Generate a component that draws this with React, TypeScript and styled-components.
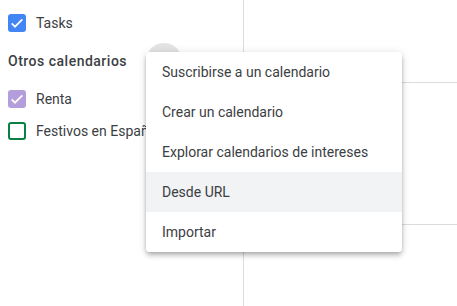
import React from 'react';
import styled, {createGlobalStyle} from 'styled-components';

const GlobalStyle = createGlobalStyle`
  html, body {
    margin: 0;
    padding: 0;
    background: #fff;
  }
  body {
    font-family: Roboto, "Noto Sans", Arial, sans-serif;
    color: #3c4043;
  }
`;

interface CalendarItem {
  label: string;
  color: string;
  checked: boolean;
}

const otherCalendars: CalendarItem[] = [
  {label: 'Renta', color: '#b39ddb', checked: true},
  {label: 'Festivos en España', color: '#0b8043', checked: false},
];

const menuItems = [
  'Suscribirse a un calendario',
  'Crear un calendario',
  'Explorar calendarios de intereses',
  'Desde URL',
  'Importar',
];

const CheckMark = () => (
  <svg width="16" height="16" viewBox="0 0 24 24">
    <path d="M4 12.5l5 5L20 6.5" fill="none" stroke="#fff" strokeWidth="2.6" />
  </svg>
);

const Calendar = ({label, color, checked}: CalendarItem) => (
  <CalendarRow>
    <Box color={color} checked={checked}>
      {checked && <CheckMark />}
    </Box>
    <Label>{label}</Label>
  </CalendarRow>
);

const App = () => {
  return (
    <Page>
      <GlobalStyle />
      <Sidebar>
        <Calendar label="Tasks" color="#4285f4" checked={true} />
        <SectionHeader>
          <SectionTitle>Otros calendarios</SectionTitle>
          <AddButton />
        </SectionHeader>
        {otherCalendars.map((item) => (
          <Calendar key={item.label} {...item} />
        ))}
      </Sidebar>
      <Grid>
        <GridRow height={83} />
        <GridRow height={142} />
        <GridRow height={81} last />
      </Grid>
      <Menu>
        {menuItems.map((item) => (
          <MenuItem key={item} active={item === 'Desde URL'}>
            {item}
          </MenuItem>
        ))}
      </Menu>
    </Page>
  );
};

const Page = styled.div`
  position: relative;
  display: flex;
  width: 457px;
  height: 306px;
  overflow: hidden;
  background: #fff;
`;

const Sidebar = styled.div`
  width: 244px;
  flex: none;
  padding: 7px 0 0 8px;
  box-sizing: border-box;
  border-right: 1px solid #dadce0;
  overflow: hidden;
`;

const CalendarRow = styled.div`
  display: flex;
  align-items: center;
  height: 32px;
  gap: 10px;
  white-space: nowrap;
`;

const Box = styled.div<{color: string; checked: boolean}>`
  width: 18px;
  height: 18px;
  flex: none;
  box-sizing: border-box;
  border-radius: 3px;
  display: flex;
  align-items: center;
  justify-content: center;
  background: ${({checked, color}) => (checked ? color : 'transparent')};
  border: ${({checked, color}) => (checked ? 'none' : `2px solid ${color}`)};
`;

const Label = styled.span`
  font-size: 14px;
  color: #3c4043;
  line-height: 20px;
`;

const SectionHeader = styled.div`
  display: flex;
  align-items: center;
  gap: 18px;
  height: 44px;
`;

const SectionTitle = styled.span`
  width: 120px;
  font-size: 14px;
  font-weight: 500;
  color: #3c4043;
  letter-spacing: 0.5px;
  white-space: nowrap;
`;

const AddButton = styled.div`
  width: 36px;
  height: 36px;
  border-radius: 50%;
  background: #e3e3e3;
  flex: none;
`;

const Grid = styled.div`
  flex: 1;
  display: flex;
  flex-direction: column;
`;

const GridRow = styled.div<{height: number; last?: boolean}>`
  height: ${({height}) => height}px;
  flex: none;
  border-bottom: ${({last}) => (last ? 'none' : '1px solid #dadce0')};
  box-sizing: border-box;
`;

const Menu = styled.div`
  position: absolute;
  left: 146px;
  top: 52px;
  width: 256px;
  background: #fff;
  border-radius: 4px;
  box-shadow: 0 4px 5px 0 rgba(0, 0, 0, 0.14), 0 1px 10px 0 rgba(0, 0, 0, 0.12),
    0 2px 4px -1px rgba(0, 0, 0, 0.2);
  overflow: hidden;
`;

const MenuItem = styled.div<{active?: boolean}>`
  height: 40px;
  display: flex;
  align-items: center;
  padding-left: 16px;
  font-size: 14px;
  color: #3c4043;
  background: ${({active}) => (active ? '#f1f3f4' : '#fff')};
  white-space: nowrap;
`;

export default App;
